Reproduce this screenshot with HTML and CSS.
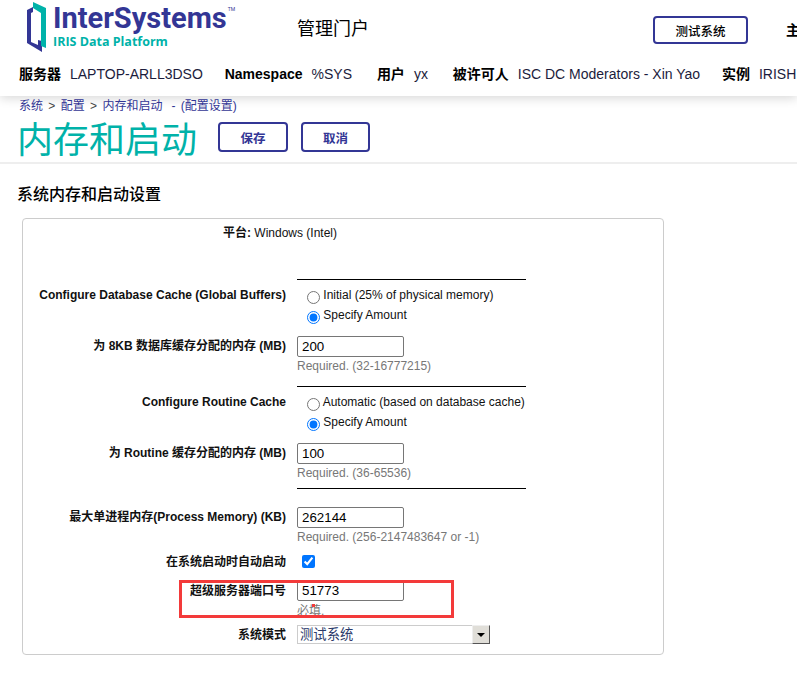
FILE: index.html
```html
<!DOCTYPE html>
<html lang="zh">

<head>
    <meta charset="UTF-8">
    <title>内存和启动</title>
    <link rel="stylesheet" href="styles.css">
</head>

<body>
    <header class="portal-header">
        <div class="header-top">
            <div class="logo">
                <svg class="logo-mark" width="30" height="52" viewBox="0 0 30 52">
                    <path fill="#333695" d="M1 9 7 6V11L5 12V41L12 44V39L16 40V51L1 42Z" />
                    <path fill="#00b2a9" d="M7 1 20 7V47L15 45V12L7 7Z" />
                </svg>
                <div class="logo-text">
                    <div class="logo-name">InterSystems<sup>TM</sup></div>
                    <div class="logo-sub">IRIS Data Platform</div>
                </div>
            </div>
            <div class="portal-title">管理门户</div>
            <button class="system-btn">测试系统</button>
            <div class="home-link">主</div>
        </div>
        <div class="header-info">
            <b>服务器</b><span class="info-val">LAPTOP-ARLL3DSO</span>
            <b class="info-gap">Namespace</b><span class="info-val">%SYS</span>
            <b class="info-gap info-gap-wide">用户</b><span class="info-val">yx</span>
            <b class="info-gap info-gap-wide">被许可人</b><span class="info-val">ISC DC Moderators - Xin Yao</span>
            <b class="info-gap">实例</b><span class="info-val">IRISH</span>
        </div>
    </header>

    <div class="title-area">
        <div class="crumbs">系统 <i>&gt;</i> 配置 <i>&gt;</i> 内存和启动<span class="crumb-note">- (配置设置)</span></div>
        <div class="title-row">
            <h1>内存和启动</h1>
            <button class="cmd-btn">保存</button>
            <button class="cmd-btn">取消</button>
        </div>
    </div>

    <h2 class="section-title">系统内存和启动设置</h2>

    <form class="settings-box">
        <div class="platform"><b>平台:</b> Windows (Intel)</div>

        <div class="line line-first"></div>
        <div class="row row-cache">
            <label class="row-label">Configure Database Cache (Global Buffers)</label>
            <div class="row-value">
                <label class="radio"><input type="radio" name="db"> Initial (25% of physical memory)</label>
                <label class="radio"><input type="radio" name="db" checked> Specify Amount</label>
            </div>
        </div>
        <div class="row row-input">
            <label class="row-label">为 8KB 数据库缓存分配的内存 (MB)</label>
            <div class="row-value">
                <input class="text-input" type="text" value="200">
                <div class="hint">Required. (32-16777215)</div>
            </div>
        </div>

        <div class="line line-mid"></div>
        <div class="row row-cache">
            <label class="row-label">Configure Routine Cache</label>
            <div class="row-value">
                <label class="radio"><input type="radio" name="rt"> Automatic (based on database cache)</label>
                <label class="radio"><input type="radio" name="rt" checked> Specify Amount</label>
            </div>
        </div>
        <div class="row row-input">
            <label class="row-label">为 Routine 缓存分配的内存 (MB)</label>
            <div class="row-value">
                <input class="text-input" type="text" value="100">
                <div class="hint">Required. (36-65536)</div>
            </div>
        </div>

        <div class="line line-last"></div>
        <div class="row row-process">
            <label class="row-label">最大单进程内存(Process Memory) (KB)</label>
            <div class="row-value">
                <input class="text-input" type="text" value="262144">
                <div class="hint">Required. (256-2147483647 or -1)</div>
            </div>
        </div>
        <div class="row row-check">
            <label class="row-label row-label-flat">在系统启动时自动启动</label>
            <div class="row-value"><input class="check" type="checkbox" checked></div>
        </div>
        <div class="row row-port">
            <label class="row-label">超级服务器端口号</label>
            <div class="row-value">
                <input class="text-input" type="text" value="51773">
                <div class="hint hint-port">必填.</div>
            </div>
        </div>
        <div class="row row-mode">
            <label class="row-label">系统模式</label>
            <div class="row-value">
                <div class="select-wrap">
                    <select class="mode-select">
                        <option>测试系统</option>
                    </select>
                    <span class="select-btn"></span>
                </div>
            </div>
        </div>

        <!-- 截图上的红框标注 -->
        <div class="red-box"><span class="red-dot"></span></div>
    </form>
</body>

</html>
```

FILE: styles.css
```css
html,
body {
    overflow: hidden;
}

body {
    margin: 0;
    width: 797px;
    height: 694px;
    background: #fff;
    color: #000;
    font-family: "Liberation Sans", "Noto Sans CJK SC", sans-serif;
    font-size: 12px;
}

/* 顶部 */
.portal-header {
    height: 96px;
    box-shadow: 0 2px 10px rgba(0, 0, 0, 0.16);
    white-space: nowrap;
}

.header-top {
    display: flex;
    align-items: flex-start;
    height: 64px;
}

.logo {
    display: flex;
    width: 297px;
    flex: none;
    padding: 1px 0 0 26px;
    box-sizing: border-box;
}

.logo-mark {
    flex: none;
}

.logo-text {
    margin-left: -3px;
    color: #333695;
}

.logo-name {
    font-family: Roboto, sans-serif;
    font-weight: 700;
    font-size: 29px;
    line-height: 34px;
}

.logo-name sup {
    font-size: 5px;
    font-weight: 400;
    vertical-align: 17px;
    line-height: 0;
    margin-left: 1px;
}

.logo-sub {
    color: #00b2a9;
    font-family: "Open Sans", sans-serif;
    font-weight: 700;
    font-size: 12.5px;
    line-height: 14px;
}

.portal-title {
    width: 356px;
    flex: none;
    font-size: 18px;
    line-height: 26px;
    margin-top: 16px;
}

.system-btn {
    width: 95px;
    height: 28px;
    flex: none;
    margin-top: 16px;
    padding: 0;
    background: #fff;
    border: 2px solid #333695;
    border-radius: 4px;
    color: #000;
    font-family: inherit;
    font-size: 12.5px;
    font-weight: 500;
}

.home-link {
    margin: 19px 0 0 38px;
    font-size: 14px;
    font-weight: 700;
}

.header-info {
    padding-left: 19px;
    font-size: 14px;
    line-height: 20px;
    color: #000;
}

.info-val {
    margin-left: 9px;
    color: #1c1c3c;
}

.info-gap {
    margin-left: 18px;
}

.info-gap-wide {
    margin-left: 21px;
}

/* 标题 */
.title-area {
    height: 66px;
    border-bottom: 2px solid #eee;
    padding-left: 19px;
}

.crumbs {
    padding-top: 3px;
    line-height: 15px;
    color: #333695;
}

.crumbs i {
    font-style: normal;
    color: #444;
    margin: 0 2px;
}

.crumb-note {
    margin-left: 9px;
    word-spacing: 2px;
}

.title-row {
    display: flex;
    align-items: flex-start;
    margin-top: 1px;
}

.title-row h1 {
    margin: 3px 21px 0 -2px;
    color: #00b2a9;
    font-size: 36px;
    font-weight: 400;
    line-height: 45px;
}

.cmd-btn {
    width: 70px;
    height: 30px;
    margin: 7px 13px 0 0;
    padding: 0;
    background: #fff;
    border: 2px solid #333695;
    border-radius: 4px;
    color: #333695;
    font-family: inherit;
    font-size: 12.5px;
    font-weight: 700;
}

.cmd-btn + .cmd-btn {
    width: 69px;
}

.section-title {
    margin: 20px 0 0 17px;
    font-size: 16px;
    font-weight: 500;
    line-height: 22px;
}

/* 表单 */
.settings-box {
    position: relative;
    width: 640px;
    height: 428px;
    margin: 12px 0 0 22px;
    padding-top: 7px;
    border: 1px solid #ccc;
    border-radius: 4px;
    color: #111;
}

.platform {
    padding-left: 200px;
    line-height: 14px;
}

.line {
    width: 229px;
    height: 1px;
    margin-left: 274px;
    background: #000;
}

.line-first {
    margin-top: 39px;
}

.line-mid {
    margin-top: 13px;
}

.line-last {
    margin-top: 8px;
}

.row {
    display: flex;
    gap: 11px;
}

.row-label {
    width: 263px;
    flex: none;
    padding-top: 3px;
    text-align: right;
    font-weight: 700;
    line-height: 14px;
}

.row-label-flat {
    padding-top: 1px;
}

.row-cache {
    margin-top: 8px;
}

.row-cache .row-label {
    padding-top: 0;
}

.row-input {
    margin-top: 8px;
}

.row-process {
    margin-top: 18px;
}

.row-check {
    margin-top: 10px;
}

.row-port {
    margin-top: 11px;
}

.row-port .row-label {
    padding-top: 4px;
}

.row-mode {
    margin-top: 7px;
}

.radio {
    display: block;
    height: 20px;
    line-height: 14px;
    white-space: nowrap;
}

.radio input {
    margin: 3px 0 0 10px;
    vertical-align: top;
}

.text-input {
    display: block;
    width: 107px;
    height: 21px;
    box-sizing: border-box;
    padding: 1px 3px 1px 4px;
    border: 1px solid #767676;
    border-radius: 2px;
    color: #000;
    font-family: inherit;
    font-size: 13.33px;
}

.hint {
    margin-top: 2px;
    color: #777;
    line-height: 14px;
}

.hint-port {
    margin-top: 3px;
}

.check {
    display: block;
    margin: 1px 0 0 5px;
}

.select-wrap {
    position: relative;
    width: 193px;
    height: 19px;
}

.mode-select {
    display: block;
    width: 100%;
    height: 100%;
    padding: 0 0 0 2px;
    appearance: none;
    background: #fff;
    border: 1px solid #ccc;
    border-radius: 0;
    color: #2b3a6b;
    font-family: inherit;
    font-size: 13.33px;
}

.select-btn {
    position: absolute;
    top: 0;
    right: 0;
    width: 18px;
    height: 19px;
    box-sizing: border-box;
    background: #e0ded8;
    border: 1px solid;
    border-color: #eee #555 #555 #eee;
}

.select-btn::after {
    content: "";
    position: absolute;
    top: 7px;
    left: 4px;
    border-style: solid;
    border-width: 4px 4px 0;
    border-color: #000 transparent transparent;
}

.red-box {
    position: absolute;
    left: 156px;
    top: 361px;
    width: 275px;
    height: 38px;
    box-sizing: border-box;
    border: 3px solid #f33a3a;
}

.red-dot {
    position: absolute;
    left: 130px;
    top: 21px;
    width: 3px;
    height: 3px;
    background: #f33a3a;
}
```
